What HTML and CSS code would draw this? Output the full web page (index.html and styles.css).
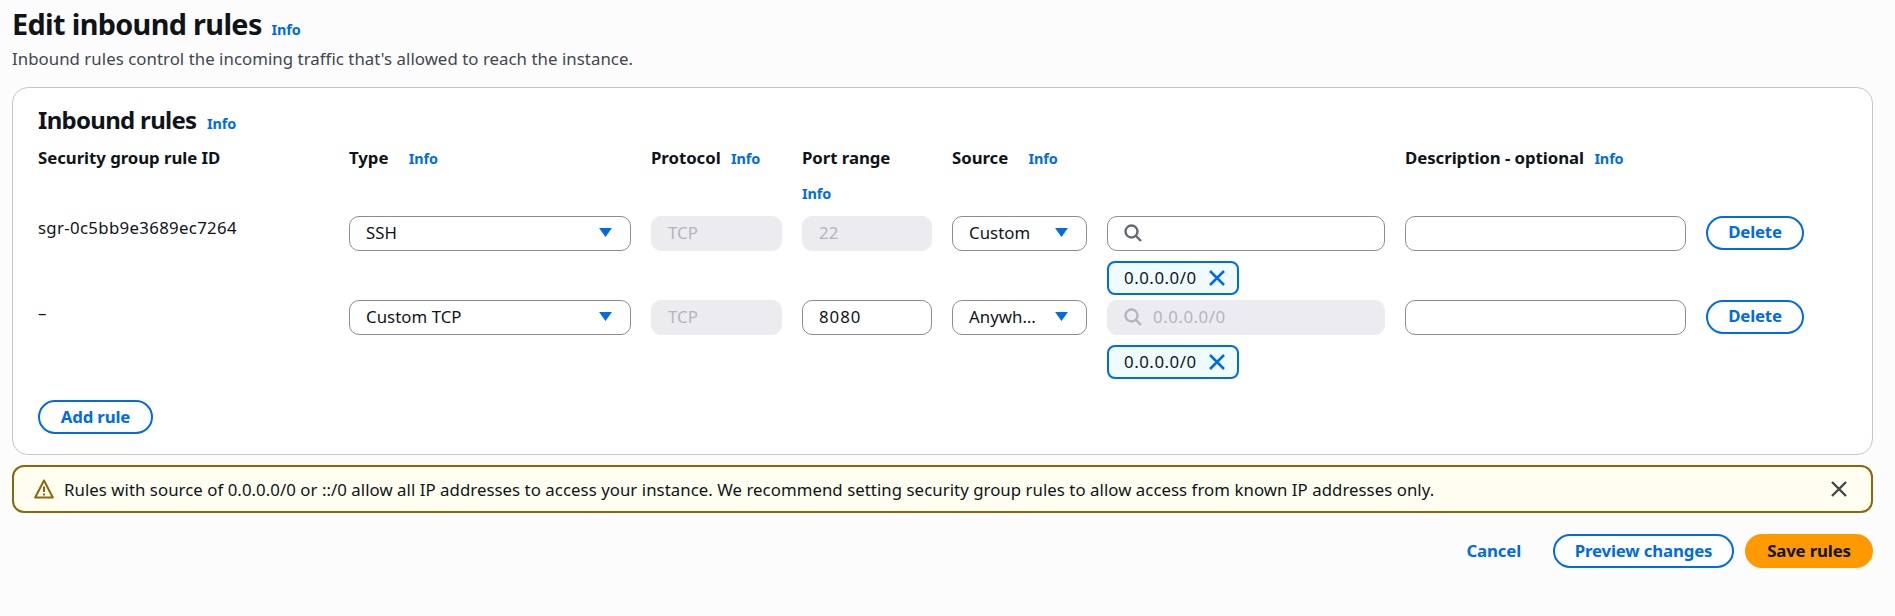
FILE: index.html
```html
<!DOCTYPE html>
<html>
<head>
  <meta charset="utf-8">
  <title>Edit inbound rules</title>
  <link rel="stylesheet" href="styles.css">
</head>
<body>
  <div class="page">
    <header class="page-head">
      <h1>Edit inbound rules <a class="info">Info</a></h1>
      <p>Inbound rules control the incoming traffic that's allowed to reach the instance.</p>
    </header>

    <section class="card">
      <h2>Inbound rules <a class="info">Info</a></h2>

      <div class="rules">
        <div class="col-label">Security group rule ID</div>
        <div class="col-label">Type <a class="info info-wide">Info</a></div>
        <div class="col-label">Protocol <a class="info">Info</a></div>
        <div class="col-label col-stack">Port range <a class="info">Info</a></div>
        <div class="col-label">Source <a class="info info-wide">Info</a></div>
        <div></div>
        <div class="col-label">Description - optional <a class="info">Info</a></div>
        <div></div>

        <div class="rule-id">sgr-0c5bb9e3689ec7264</div>
        <div class="field select">SSH <svg class="caret" viewBox="0 0 14 12"><path d="M0 1h14L7 11z"/></svg></div>
        <div class="field disabled">TCP</div>
        <div class="field disabled">22</div>
        <div class="field select">Custom <svg class="caret" viewBox="0 0 14 12"><path d="M0 1h14L7 11z"/></svg></div>
        <div class="source-cell">
          <div class="field search">
            <svg class="glass" viewBox="0 0 18 18"><circle cx="7.5" cy="7.5" r="6"/><path d="M12 12l5 5"/></svg>
          </div>
          <div class="tag"><span class="num">0.0.0.0/0</span> <svg class="tag-x" viewBox="0 0 16 16"><path d="M1 1l14 14M15 1L1 15"/></svg></div>
        </div>
        <div class="field"></div>
        <div><button class="btn btn-delete">Delete</button></div>

        <div class="rule-id rule-id-none">–</div>
        <div class="field select">Custom TCP <svg class="caret" viewBox="0 0 14 12"><path d="M0 1h14L7 11z"/></svg></div>
        <div class="field disabled">TCP</div>
        <div class="field"><span class="port">8080</span></div>
        <div class="field select"><span class="clip">Anywh…</span> <svg class="caret" viewBox="0 0 14 12"><path d="M0 1h14L7 11z"/></svg></div>
        <div class="source-cell">
          <div class="field search disabled">
            <svg class="glass" viewBox="0 0 18 18"><circle cx="7.5" cy="7.5" r="6"/><path d="M12 12l5 5"/></svg>
            <span class="num">0.0.0.0/0</span>
          </div>
          <div class="tag"><span class="num">0.0.0.0/0</span> <svg class="tag-x" viewBox="0 0 16 16"><path d="M1 1l14 14M15 1L1 15"/></svg></div>
        </div>
        <div class="field"></div>
        <div><button class="btn btn-delete">Delete</button></div>
      </div>

      <button class="btn btn-add">Add rule</button>
    </section>

    <div class="alert">
      <svg class="alert-icon" viewBox="0 0 20 20"><path class="tri" d="M10 1.5L1.2 18.5h17.6z"/><path class="mark" d="M10 7.5v5.5M10 14.5v2"/></svg>
      <span class="alert-text">Rules with source of 0.0.0.0/0 or ::/0 allow all IP addresses to access your instance. We recommend setting security group rules to allow access from known IP addresses only.</span>
      <svg class="alert-close" viewBox="0 0 16 16"><path d="M1 1l14 14M15 1L1 15"/></svg>
    </div>

    <div class="actions">
      <a class="link-btn">Cancel</a>
      <button class="btn btn-preview">Preview changes</button>
      <button class="btn btn-primary">Save rules</button>
    </div>
  </div>
</body>
</html>
```

FILE: styles.css
```css
body {
  margin: 0;
  background-color: #fcfcfc;
  color: #0f141a;
  font-family: "Noto Sans", sans-serif;
  font-size: 16.8px;
  letter-spacing: 0.05px;
}

.page {
  padding: 0 22px 0 12px;
}

.page-head h1 {
  margin: 0;
  padding-top: 6px;
  font-size: 28.8px;
  line-height: 36px;
  font-weight: 700;
  letter-spacing: -0.65px;
}

.page-head p {
  margin: 0;
  line-height: 22px;
  color: #424650;
}

.info {
  margin-left: 6px;
  color: #006ce0;
  font-size: 14.4px;
  font-weight: 700;
  letter-spacing: -0.1px;
}

.page-head .info {
  margin-left: 3px;
}

.card h2 .info {
  margin-left: 5px;
}

.info-wide {
  margin-left: 16px;
}

.card {
  margin-top: 17px;
  padding: 17px 26px 20px 25px;
  height: 368px;
  box-sizing: border-box;
  background-color: #fff;
  border: 1px solid #c6c6cd;
  border-radius: 16px;
}

.card h2 {
  margin: 0;
  font-size: 24px;
  line-height: 30px;
  font-weight: 700;
  letter-spacing: -0.7px;
}

.rules {
  display: grid;
  grid-template-columns: 291px 282px 131px 130px 135px 278px 281px 98px;
  column-gap: 20px;
  row-gap: 5px;
  margin-top: 7px;
}

.col-label {
  font-weight: 700;
  line-height: 24px;
  letter-spacing: -0.05px;
  margin-bottom: 6px;
}

.col-stack .info {
  display: block;
  margin: 13px 0 0;
  line-height: 22px;
}

.rule-id {
  line-height: 24px;
  letter-spacing: 0.33px;
}

.rule-id-none {
  padding-top: 1px;
}

.field {
  height: 35px;
  box-sizing: border-box;
  padding: 0 16px 2px;
  display: flex;
  align-items: center;
  background-color: #fff;
  border: 1px solid #8c8c94;
  border-radius: 10px;
  white-space: nowrap;
}

.field.disabled {
  background-color: #ebebf0;
  border-color: #ebebf0;
  color: #b4b4bb;
}

.select {
  justify-content: space-between;
  padding-right: 18px;
}

.caret {
  width: 13px;
  height: 11px;
  fill: #006ce0;
  flex: none;
}

.num {
  letter-spacing: 0.55px;
}

.port {
  letter-spacing: 1px;
}

.search {
  gap: 11px;
  align-self: stretch;
}

.glass {
  width: 18px;
  height: 18px;
  fill: none;
  stroke: #656871;
  stroke-width: 2.4;
}

.disabled .glass {
  stroke: #b4b4bb;
}

.source-cell {
  display: flex;
  flex-direction: column;
  align-items: flex-start;
  gap: 10px;
}

.tag {
  width: 132px;
  height: 34px;
  box-sizing: border-box;
  padding: 0 12px 2px 15px;
  display: flex;
  align-items: center;
  justify-content: space-between;
  background-color: #f0fbff;
  border: 2px solid #006ce0;
  border-radius: 8px;
}

.tag-x {
  width: 16px;
  height: 16px;
  margin-top: 2px;
  fill: none;
  stroke: #006ce0;
  stroke-width: 2.6;
}

.btn {
  height: 34px;
  padding: 0 0 2px;
  background-color: #fff;
  border: 2px solid #006ce0;
  border-radius: 20px;
  color: #006ce0;
  font-family: inherit;
  font-size: 16.8px;
  font-weight: 700;
  letter-spacing: -0.15px;
  width: 98px;
}

.btn-delete {
  padding-bottom: 3px;
}

.btn-add {
  display: block;
  width: 115px;
  margin-top: 21px;
}

.alert {
  margin-top: 10px;
  height: 48px;
  box-sizing: border-box;
  padding: 0 24px 0 20px;
  display: flex;
  align-items: center;
  background-color: #fffef0;
  border: 2px solid #8d6605;
  border-radius: 12px;
}

.alert-icon {
  width: 20px;
  height: 20px;
  margin-right: 10px;
  flex: none;
}

.alert-icon .tri {
  fill: none;
  stroke: #8d6605;
  stroke-width: 2;
  stroke-linejoin: round;
}

.alert-icon .mark {
  fill: none;
  stroke: #8d6605;
  stroke-width: 2;
}

.alert-text {
  flex: 1;
}

.alert-close {
  width: 16px;
  height: 16px;
  fill: none;
  stroke: #424650;
  stroke-width: 2.4;
}

.actions {
  margin-top: 21px;
  display: flex;
  justify-content: flex-end;
  align-items: center;
}

.link-btn {
  margin-right: 32px;
  padding-bottom: 2px;
  color: #006ce0;
  font-weight: 700;
  letter-spacing: -0.15px;
}

.btn-preview {
  width: 181px;
  margin-right: 11px;
}

.btn-primary {
  width: 128px;
  background-color: #ff9900;
  border-color: #ff9900;
  color: #0f141a;
}
```
